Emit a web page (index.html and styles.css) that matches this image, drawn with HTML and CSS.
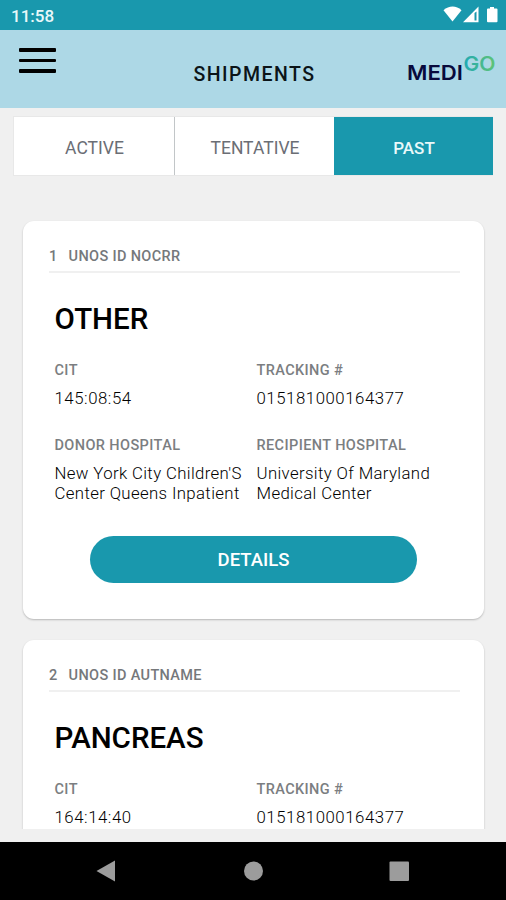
FILE: index.html
```html
<!DOCTYPE html>
<html lang="en">
<head>
<meta charset="utf-8">
<title>Shipments</title>
<link rel="stylesheet" href="styles.css">
</head>
<body>
<div class="screen">
  <div class="status">
    <span class="clock">11:58</span>
    <svg class="status-icons" width="56" height="18" viewBox="0 0 56 18">
      <path d="M0.5 4.2C6 -0.7 13.300 -0.700 18.500 4.200L9.500 15.500Z"/>
      <path fill-rule="evenodd" d="M35.500 0.500V16.300H20ZM31.500 7V14.500H33.500V5.500Z"/>
      <path d="M47 1h4v1.600h2.500q1 0 1 1V15.300q0 1-1 1h-8.500q-1 0-1-1V3.600q0-1 1-1h2z"/>
    </svg>
  </div>
  <header class="header">
    <div class="menu"><i></i><i></i><i></i></div>
    <h1 class="title">SHIPMENTS</h1>
    <svg class="logo" width="90" height="30" viewBox="0 0 90 30">
      <defs><linearGradient id="go" x1="0" x2="1"><stop offset="0" stop-color="#20a9b4"/><stop offset="1" stop-color="#61c474"/></linearGradient></defs>
      <text class="logo-medi" x="1" y="26" textLength="56" lengthAdjust="spacingAndGlyphs">MEDI</text>
      <text class="logo-go" x="57.500" y="17" textLength="32" lengthAdjust="spacingAndGlyphs" fill="url(#go)">GO</text>
    </svg>
  </header>
  <nav class="tabs">
    <div class="tab">ACTIVE</div>
    <div class="tab">TENTATIVE</div>
    <div class="tab tab-on">PAST</div>
  </nav>
  <main class="list">
    <section class="card">
      <div class="card-head"><span class="num">1</span><span>UNOS ID NOCRR</span></div>
      <h2 class="organ">OTHER</h2>
      <div class="fields">
        <div class="field"><div class="label">CIT</div><div class="value number">145:08:54</div></div>
        <div class="field"><div class="label">TRACKING #</div><div class="value number">015181000164377</div></div>
        <div class="field"><div class="label">DONOR HOSPITAL</div><div class="value">New York City Children'S<br>Center Queens Inpatient</div></div>
        <div class="field"><div class="label">RECIPIENT HOSPITAL</div><div class="value">University Of Maryland<br>Medical Center</div></div>
      </div>
      <div class="button">DETAILS</div>
    </section>
    <section class="card">
      <div class="card-head"><span class="num">2</span><span>UNOS ID AUTNAME</span></div>
      <h2 class="organ">PANCREAS</h2>
      <div class="fields">
        <div class="field"><div class="label">CIT</div><div class="value number">164:14:40</div></div>
        <div class="field"><div class="label">TRACKING #</div><div class="value number">015181000164377</div></div>
      </div>
    </section>
  </main>
  <footer class="navbar">
    <svg width="506" height="58" viewBox="0 0 506 58">
      <path d="M96.500 29L115 18.500V39.500Z"/>
      <circle cx="253.500" cy="29" r="9.500"/>
      <rect x="389.500" y="19.500" width="19.500" height="19.500" rx="1"/>
    </svg>
  </footer>
</div>
</body>
</html>
```
FILE: styles.css
```css
* { box-sizing: border-box; }
body { margin: 0; font-family: Roboto, "Liberation Sans", sans-serif; }
.screen { width: 506px; height: 900px; display: flex; flex-direction: column; background: #f0f0f0; overflow: hidden; }
.status { height: 30px; flex: none; background: #1998ad; display: flex; justify-content: space-between; padding: 6px 7px 0 11px; color: #e9f8fa; }
.clock { font-size: 17px; line-height: 20px; font-weight: 500; }
.status-icons { fill: #fff; }
.header { height: 78px; flex: none; background: #add8e6; display: flex; justify-content: space-between; padding: 0 10px 0 19px; }
.menu { width: 84px; padding-top: 18px; display: flex; flex-direction: column; gap: 7px; }
.menu i { width: 37px; height: 3.500px; background: #000; border-radius: 1px; }
.title { margin: 34px 0 0; font-size: 19.500px; line-height: 22px; font-weight: 500; letter-spacing: 1.450px; color: #0b1418; }
.logo { margin-top: 24px; overflow: visible; }
.logo text { font-family: Inter, sans-serif; font-size: 20px; font-weight: 600; }
.logo-medi { fill: #080a3c; }
.tabs { flex: none; margin: 8px 13px 0; height: 60px; display: grid; grid-template-columns: 160px 160px 159px; border: 1px solid #e8e8e8; border-right: 0; }
.tab { display: flex; align-items: center; justify-content: center; background: #fff; font-size: 17.500px; color: #6b6e75; padding: 4px 0 0 1px; }
.tab + .tab { border-left: 1px solid #c2c6c8; }
.tab.tab-on { background: #1998ad; border-left: 0; color: #e9f9fa; font-weight: 500; font-size: 17px; padding-top: 3px; }
.list { flex: none; height: 653px; padding: 45px 22px 0 23px; overflow: hidden; display: flex; flex-direction: column; gap: 21px; }
.card { height: 398px; flex: none; background: #fff; border-radius: 11px; box-shadow: 0 1px 2px rgba(0,0,0,.24); padding: 24px 24px 0 26px; }
.card-head { height: 28px; padding-top: 3px; border-bottom: 2px solid #f0f0f0; display: flex; gap: 11px; font-size: 14.500px; line-height: 18px; font-weight: 500; letter-spacing: .35px; color: #75787b; }
.organ { margin: 28px 0 0 5.500px; font-size: 29.500px; line-height: 36px; font-weight: 500; color: #000; }
.fields { margin: 25px 0 0 5.500px; display: grid; grid-template-columns: 202px 1fr; row-gap: 29px; white-space: nowrap; }
.label { font-size: 14.500px; line-height: 18px; font-weight: 500; letter-spacing: .4px; color: #7b7e81; }
.value { margin-top: 8px; font-size: 16.800px; line-height: 20px; font-weight: 300; letter-spacing: .36px; color: #000; }
.number { letter-spacing: .55px; }
.button { margin: 33px 43px 0 41px; height: 47px; border-radius: 24px; background: #1998ad; color: #fff; display: flex; align-items: center; justify-content: center; font-size: 18.500px; font-weight: 500; }
.navbar { margin-top: 13px; height: 58px; flex: none; background: #000; }
.navbar svg { display: block; fill: #9c9c9c; }
```
